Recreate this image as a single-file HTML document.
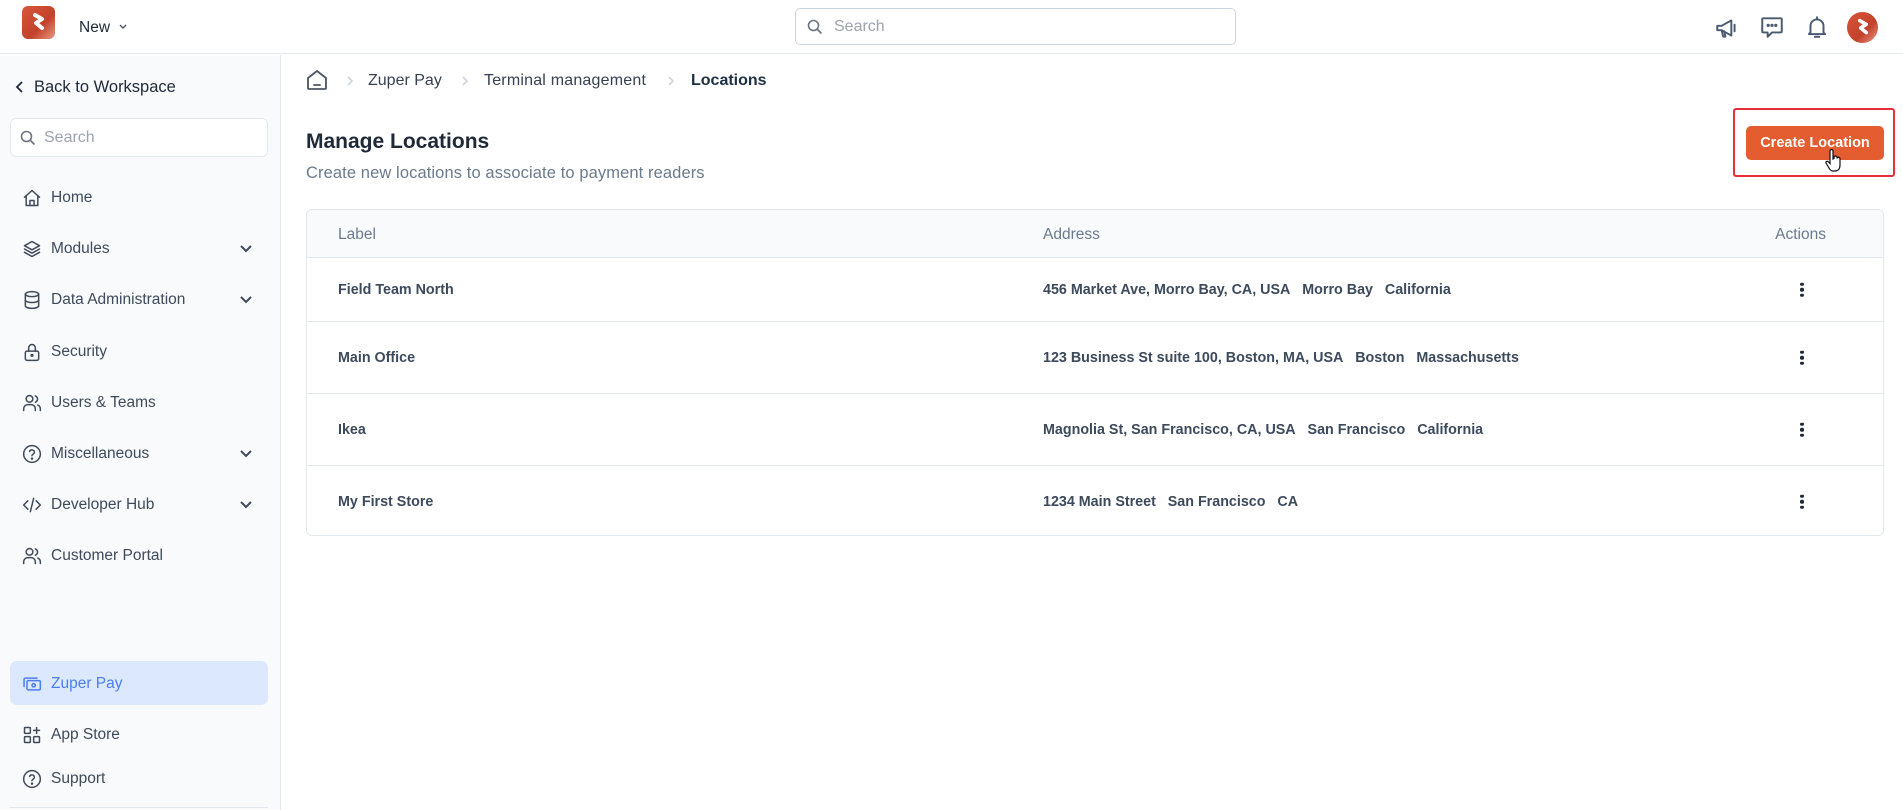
<!DOCTYPE html>
<html><head><meta charset="utf-8"><style>
*{box-sizing:border-box;margin:0;padding:0}
body{width:1903px;height:810px;overflow:hidden;font-family:"Liberation Sans",sans-serif;background:#fff;color:#1f2937;position:relative}
.abs{position:absolute}
.hdr{left:0;top:0;width:1903px;height:54px;border-bottom:1px solid #e2e8f0;background:#fff}
.side{left:0;top:55px;width:281px;height:755px;background:#f8fafc;border-right:1px solid #e2e8f0}
.nav{position:absolute;left:22px;display:flex;align-items:center;font-size:15.5px;color:#3f4a5a;height:24px}
.nav svg{width:20px;height:20px;margin-right:9px;stroke:#3f4a5a;fill:none;stroke-width:1.8;stroke-linecap:round;stroke-linejoin:round}
.chev{position:absolute;left:239px;width:14px;height:14px;stroke:#3f4a5a;fill:none;stroke-width:2}
.tbl{left:306px;top:209px;width:1578px;height:327px;border:1px solid #e2e8f0;border-radius:6px;overflow:hidden}
.row{position:absolute;left:0;width:100%;border-top:1px solid #e2e8f0;font-size:14.3px;font-weight:bold;color:#3d4a5c}
.row span{position:absolute;top:50%;transform:translateY(-50%)}
.dots{position:absolute;left:1493px;top:50%;transform:translateY(-50%);width:4px}
.dots i{display:block;width:3.5px;height:3.5px;border-radius:50%;background:#1f2937;margin:2px 0}
</style></head><body>
<div class="abs hdr">
  <div class="abs" style="left:22px;top:6px;width:33px;height:33px;border-radius:6px;background:linear-gradient(135deg,#d9573b,#c2412a 60%,#e99a85)"></div>
  <svg class="abs" style="left:28px;top:11px" width="21" height="23" viewBox="0 0 21 23"><path d="M7 4 L14 8 L8 12 L14 17" stroke="#fff" stroke-width="4" fill="none" stroke-linecap="round" stroke-linejoin="round"/></svg>
  <div class="abs" style="left:79px;top:19px;font-size:15.5px;color:#1f2937">New</div>
  <svg class="abs" style="left:118px;top:23px" width="10" height="8" viewBox="0 0 10 8"><path d="M2 2 L5 5 L8 2" stroke="#4b5563" stroke-width="1.4" fill="none"/></svg>
  <div class="abs" style="left:795px;top:8px;width:441px;height:37px;border:1px solid #cbd5e1;border-radius:5px"></div>
  <svg class="abs" style="left:807px;top:19px" width="16" height="16" viewBox="0 0 16 16"><circle cx="6.5" cy="6.5" r="5" stroke="#6b7280" stroke-width="1.6" fill="none"/><path d="M10.5 10.5 L14.5 14.5" stroke="#6b7280" stroke-width="1.6"/></svg>
  <div class="abs" style="left:834px;top:18px;font-size:16px;color:#9ca3af">Search</div>
  <svg class="abs" style="left:1714px;top:15px" width="26" height="26" viewBox="0 0 24 24" fill="none" stroke="#4b5a6e" stroke-width="1.8" stroke-linejoin="round" stroke-linecap="round"><path d="M3 10 v4 h4 l9 5 V5 L7 10 Z"/><path d="M7 14 l1.5 6 h2 l-1 -5"/><path d="M19 9 v6"/></svg>
  <svg class="abs" style="left:1759px;top:14px" width="26" height="26" viewBox="0 0 24 24" fill="none" stroke="#4b5a6e" stroke-width="1.8" stroke-linejoin="round"><path d="M4 4 h16 a1 1 0 0 1 1 1 v11 a1 1 0 0 1 -1 1 h-8 l-4 4 v-4 h-4 a1 1 0 0 1 -1 -1 v-11 a1 1 0 0 1 1 -1z"/><circle cx="8.5" cy="10.5" r=".6" fill="#4b5a6e"/><circle cx="12" cy="10.5" r=".6" fill="#4b5a6e"/><circle cx="15.5" cy="10.5" r=".6" fill="#4b5a6e"/></svg>
  <svg class="abs" style="left:1804px;top:14px" width="26" height="26" viewBox="0 0 24 24" fill="none" stroke="#4b5a6e" stroke-width="1.8" stroke-linejoin="round" stroke-linecap="round"><path d="M6 17 V11 a6 6 0 0 1 12 0 v6 l1.5 1.5 h-15 z"/><path d="M10 21 h4"/><path d="M12 3 v2"/></svg>
  <div class="abs" style="left:1847px;top:12px;width:31px;height:31px;border-radius:50%;background:linear-gradient(135deg,#d9573b,#c2412a 60%,#e99a85)"></div>
  <svg class="abs" style="left:1853px;top:17px" width="20" height="21" viewBox="0 0 21 23"><path d="M7 4 L14 8 L8 12 L14 17" stroke="#fff" stroke-width="4" fill="none" stroke-linecap="round" stroke-linejoin="round"/></svg>
</div>
<div class="abs side">
  <svg class="abs" style="left:14px;top:25px" width="12" height="14" viewBox="0 0 12 14"><path d="M8 2 L3 7 L8 12" stroke="#1f2937" stroke-width="1.8" fill="none"/></svg>
  <div class="abs" style="left:34px;top:23px;font-size:16.5px;color:#1f2937">Back to Workspace</div>
  <div class="abs" style="left:10px;top:63px;width:258px;height:39px;background:#fff;border:1px solid #e2e8f0;border-radius:6px"></div>
  <svg class="abs" style="left:20px;top:75px" width="16" height="16" viewBox="0 0 16 16"><circle cx="6.5" cy="6.5" r="5" stroke="#6b7280" stroke-width="1.6" fill="none"/><path d="M10.5 10.5 L14.5 14.5" stroke="#6b7280" stroke-width="1.6"/></svg>
  <div class="abs" style="left:44px;top:74px;font-size:16px;color:#9ca3af">Search</div>
</div>
<div class="nav" style="top:186px"><svg viewBox="0 0 24 24"><path d="M3 11 L12 3 L21 11 M5 9 V21 H19 V9"/><path d="M9.5 21 v-6 h5 v6"/></svg>Home</div>
<div class="nav" style="top:237px"><svg viewBox="0 0 24 24"><path d="M12 3 L21 8 L12 13 L3 8 Z"/><path d="M3 12 L12 17 L21 12"/><path d="M3 16 L12 21 L21 16"/></svg>Modules</div>
<svg class="chev" style="top:242px" viewBox="0 0 14 14"><path d="M2 4 L7 9 L12 4"/></svg>
<div class="nav" style="top:288px"><svg viewBox="0 0 24 24"><ellipse cx="12" cy="5" rx="8" ry="3"/><path d="M4 5 v14 c0 1.7 3.6 3 8 3 s8-1.3 8-3 V5"/><path d="M4 12 c0 1.7 3.6 3 8 3 s8-1.3 8-3"/></svg>Data Administration</div>
<svg class="chev" style="top:293px" viewBox="0 0 14 14"><path d="M2 4 L7 9 L12 4"/></svg>
<div class="nav" style="top:340px"><svg viewBox="0 0 24 24"><rect x="4" y="11" width="16" height="11" rx="2"/><path d="M8 11 V7 a4 4 0 0 1 8 0 v4"/><circle cx="12" cy="16" r="1" fill="#3f4a5a"/></svg>Security</div>
<div class="nav" style="top:391px"><svg viewBox="0 0 24 24"><circle cx="9" cy="7" r="4"/><path d="M2 21 v-2 a5 5 0 0 1 5-5 h4 a5 5 0 0 1 5 5 v2"/><path d="M16 3.5 a4 4 0 0 1 0 7.5"/><path d="M22 21 v-2 a5 5 0 0 0 -3-4.5"/></svg>Users &amp; Teams</div>
<div class="nav" style="top:442px"><svg viewBox="0 0 24 24"><circle cx="12" cy="12" r="10"/><path d="M9.1 9 a3 3 0 0 1 5.8 1 c0 2-3 2.5-3 4"/><circle cx="12" cy="17.5" r=".6" fill="#3f4a5a"/></svg>Miscellaneous</div>
<svg class="chev" style="top:447px" viewBox="0 0 14 14"><path d="M2 4 L7 9 L12 4"/></svg>
<div class="nav" style="top:493px"><svg viewBox="0 0 24 24"><path d="M7 7 L2 12 L7 17"/><path d="M17 7 L22 12 L17 17"/><path d="M14 4 L10 20"/></svg>Developer Hub</div>
<svg class="chev" style="top:498px" viewBox="0 0 14 14"><path d="M2 4 L7 9 L12 4"/></svg>
<div class="nav" style="top:544px"><svg viewBox="0 0 24 24"><circle cx="9" cy="7" r="4"/><path d="M2 21 v-2 a5 5 0 0 1 5-5 h4 a5 5 0 0 1 5 5 v2"/><path d="M16 3.5 a4 4 0 0 1 0 7.5"/><path d="M22 21 v-2 a5 5 0 0 0 -3-4.5"/></svg>Customer Portal</div>
<div class="abs" style="left:10px;top:661px;width:258px;height:44px;background:#dbe8fe;border-radius:7px"></div>
<div class="nav" style="top:672px;color:#4c7ef0"><svg viewBox="0 0 24 24" style="stroke:#4c7ef0"><rect x="6" y="8" width="16" height="11" rx="1.5"/><path d="M18 5 H4 a1.5 1.5 0 0 0 -1.5 1.5 V15"/><circle cx="14" cy="13.5" r="2"/></svg>Zuper Pay</div>
<div class="nav" style="top:723px"><svg viewBox="0 0 24 24"><rect x="3" y="3" width="7" height="7" rx="1"/><rect x="3" y="14" width="7" height="7" rx="1"/><rect x="14" y="14" width="7" height="7" rx="1"/><path d="M17.5 3 v7 M14 6.5 h7"/></svg>App Store</div>
<div class="nav" style="top:767px"><svg viewBox="0 0 24 24"><circle cx="12" cy="12" r="10"/><path d="M9.1 9 a3 3 0 0 1 5.8 1 c0 2-3 2.5-3 4"/><circle cx="12" cy="17.5" r=".6" fill="#3f4a5a"/></svg>Support</div>
<div class="abs" style="left:10px;top:807px;width:258px;height:1px;background:#e2e8f0"></div>

<svg class="abs" style="left:305px;top:69px" width="24" height="22" viewBox="0 0 24 22" fill="none" stroke="#4b5563" stroke-width="1.8" stroke-linejoin="round"><path d="M3 9 L12 2 L21 9 V19 a1 1 0 0 1 -1 1 H4 a1 1 0 0 1 -1 -1 Z"/><path d="M9 16 h6" stroke-linecap="round"/></svg>
<svg class="abs" style="left:345px;top:75px" width="10" height="12" viewBox="0 0 10 12"><path d="M3 2 L7 6 L3 10" stroke="#cbd5e1" stroke-width="1.6" fill="none"/></svg>
<div class="abs" style="left:368px;top:72px;font-size:16px;color:#374151">Zuper Pay</div>
<svg class="abs" style="left:460px;top:75px" width="10" height="12" viewBox="0 0 10 12"><path d="M3 2 L7 6 L3 10" stroke="#cbd5e1" stroke-width="1.6" fill="none"/></svg>
<div class="abs" style="left:484px;top:72px;font-size:16px;color:#374151;letter-spacing:0.2px">Terminal management</div>
<svg class="abs" style="left:666px;top:75px" width="10" height="12" viewBox="0 0 10 12"><path d="M3 2 L7 6 L3 10" stroke="#cbd5e1" stroke-width="1.6" fill="none"/></svg>
<div class="abs" style="left:691px;top:72px;font-size:16px;font-weight:bold;color:#1f2f44">Locations</div>

<div class="abs" style="left:306px;top:130px;font-size:21px;font-weight:bold;color:#1f2937">Manage Locations</div>
<div class="abs" style="left:306px;top:164px;font-size:16.5px;color:#6b7a8d;letter-spacing:0.1px">Create new locations to associate to payment readers</div>

<div class="abs" style="left:1733px;top:108px;width:162px;height:69px;border:2.5px solid #e5303a;border-radius:3px"></div>
<div class="abs" style="left:1746px;top:126px;width:138px;height:34px;background:#e45d31;border-radius:5px;color:#fff;font-size:14.5px;font-weight:bold;text-align:center;line-height:35px">Create Location</div>
<svg class="abs" style="left:1825px;top:149px" width="18" height="24" viewBox="0 0 18 24"><path d="M5 2 a1.5 1.5 0 0 1 3 0 v8 l1-.5 v-1 a1.5 1.5 0 0 1 3 0 v1 a1.5 1.5 0 0 1 3 .5 v6 c0 4-2 6-5 6 h-2 c-2 0-3-1-4-3 l-3-5 a1.3 1.3 0 0 1 2-1.5 l2 2 Z" fill="#fff" stroke="#111" stroke-width="1.2"/></svg>

<div class="abs tbl">
  <div class="abs" style="left:0;top:0;width:100%;height:47px;background:#f8fafc;font-size:15.5px;color:#6b7a8d">
    <span class="abs" style="left:31px;top:16px">Label</span>
    <span class="abs" style="left:736px;top:16px">Address</span>
    <span class="abs" style="right:57px;top:16px">Actions</span>
  </div>
  <div class="row" style="top:47px;height:64px"><span style="left:31px">Field Team North</span><span style="left:736px">456 Market Ave, Morro Bay, CA, USA&nbsp;&nbsp; Morro Bay&nbsp;&nbsp; California</span><div class="dots"><i></i><i></i><i></i></div></div>
  <div class="row" style="top:111px;height:72px"><span style="left:31px">Main Office</span><span style="left:736px">123 Business St suite 100, Boston, MA, USA&nbsp;&nbsp; Boston&nbsp;&nbsp; Massachusetts</span><div class="dots"><i></i><i></i><i></i></div></div>
  <div class="row" style="top:183px;height:72px"><span style="left:31px">Ikea</span><span style="left:736px">Magnolia St, San Francisco, CA, USA&nbsp;&nbsp; San Francisco&nbsp;&nbsp; California</span><div class="dots"><i></i><i></i><i></i></div></div>
  <div class="row" style="top:255px;height:72px"><span style="left:31px">My First Store</span><span style="left:736px">1234 Main Street&nbsp;&nbsp; San Francisco&nbsp;&nbsp; CA</span><div class="dots"><i></i><i></i><i></i></div></div>
</div>
</body></html>
